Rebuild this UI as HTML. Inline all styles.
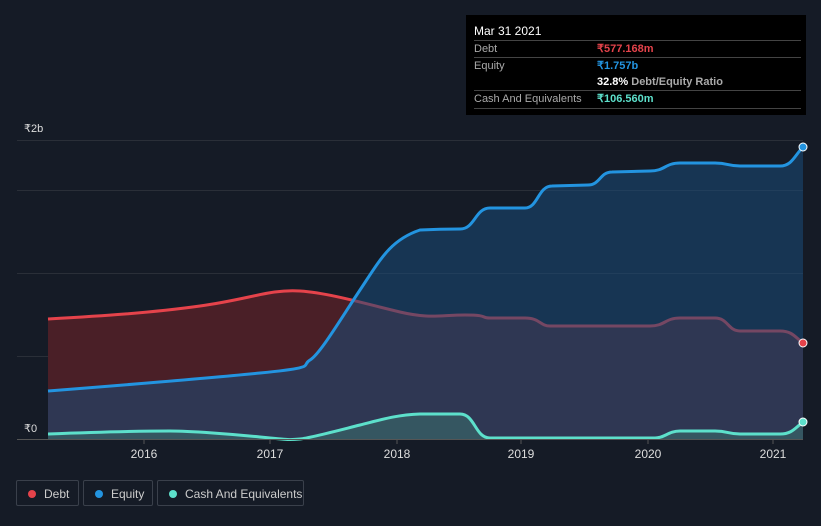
<!DOCTYPE html>
<html><head><meta charset="utf-8"><style>
body{margin:0;background:#151b26;width:821px;height:526px;overflow:hidden;font-family:"Liberation Sans",sans-serif;position:relative}
.tt{position:absolute;left:466px;top:15px;width:340px;height:100px;background:#000;color:#fff;font-size:11px}
.row{position:absolute;left:8px;width:327px;border-top:1px solid #444;height:17px;line-height:17px;color:#aaa}
.row b{position:absolute;left:123px;font-weight:bold}
.leg{position:absolute;top:480px;height:26px;border:1px solid #3a404b;border-radius:2px;color:#ccc;font-size:12px;line-height:26px;box-sizing:border-box}
.leg i{position:absolute;left:11px;top:9px;width:8px;height:8px;border-radius:50%}
.leg span{position:absolute;left:27px}
</style></head><body>
<svg width="821" height="526" style="position:absolute;left:0;top:0">
<g stroke="#2a2f38" stroke-width="1">
<line x1="17" y1="140.5" x2="803" y2="140.5"/><line x1="17" y1="190.5" x2="803" y2="190.5"/>
<line x1="17" y1="273.5" x2="803" y2="273.5"/><line x1="17" y1="356.5" x2="803" y2="356.5"/>
</g>
<path d="M48,319 C100,316 150,313 200,306 S270,289 300,291 S370,305 400,312 S440,315 465,315 S480,318 490,318 L525,318 C540,318 540,326 550,326 L650,326 C665,326 665,318 680,318 L715,318 C728,318 728,331 740,331 L780,331 C792,331 795,337 803,343 L803,439 L48,439Z" fill="#4a1f27"/>
<path d="M48,319 C100,316 150,313 200,306 S270,289 300,291 S370,305 400,312 S440,315 465,315 S480,318 490,318 L525,318 C540,318 540,326 550,326 L650,326 C665,326 665,318 680,318 L715,318 C728,318 728,331 740,331 L780,331 C792,331 795,337 803,343" fill="none" stroke="#e5434b" stroke-width="3"/>
<path d="M48,391 C150,383 200,379 260,373 S300,366 310,360 S340,320 360,290 S390,240 420,230 C440,229 450,229 460,229 C475,229 475,208 490,208 L525,208 C538,208 538,186 552,186 L588,185 C600,185 600,172 612,172 L650,171 C665,171 665,163 680,163 L715,163 C728,163 728,166 740,166 L780,166 C792,166 795,155 803,147 L803,439 L48,439Z" fill="#1a4a78" fill-opacity="0.55"/>
<path d="M48,391 C150,383 200,379 260,373 S300,366 310,360 S340,320 360,290 S390,240 420,230 C440,229 450,229 460,229 C475,229 475,208 490,208 L525,208 C538,208 538,186 552,186 L588,185 C600,185 600,172 612,172 L650,171 C665,171 665,163 680,163 L715,163 C728,163 728,166 740,166 L780,166 C792,166 795,155 803,147" fill="none" stroke="#2394e0" stroke-width="3"/>
<path d="M48,434 C100,432 150,431 170,431 S230,434 260,437 S290,440 300,439 S340,430 360,425 S395,415 420,414 L460,414 C475,414 475,438 490,438 L655,438 C665,438 668,431 680,431 L715,431 C728,431 728,434 740,434 L780,434 C792,434 795,428 803,422 L803,439 L48,439Z" fill="#3a6a6a" fill-opacity="0.6"/>
<path d="M48,434 C100,432 150,431 170,431 S230,434 260,437 S290,440 300,439 S340,430 360,425 S395,415 420,414 L460,414 C475,414 475,438 490,438 L655,438 C665,438 668,431 680,431 L715,431 C728,431 728,434 740,434 L780,434 C792,434 795,428 803,422" fill="none" stroke="#5de0cb" stroke-width="3"/>
<line x1="17" y1="439.5" x2="803" y2="439.5" stroke="#555"/>
<rect x="17" y="419" width="31" height="20" fill="#151b26"/>
<circle cx="803" cy="147" r="4" fill="#2394e0" stroke="#fff" stroke-width="1"/>
<circle cx="803" cy="343" r="4" fill="#e5434b" stroke="#fff" stroke-width="1"/>
<circle cx="803" cy="422" r="4" fill="#5de0cb" stroke="#fff" stroke-width="1"/>
<g stroke="#555"><line x1="144" y1="440" x2="144" y2="444"/><line x1="270" y1="440" x2="270" y2="444"/><line x1="397" y1="440" x2="397" y2="444"/><line x1="521" y1="440" x2="521" y2="444"/><line x1="648" y1="440" x2="648" y2="444"/><line x1="773" y1="440" x2="773" y2="444"/></g>
<g fill="#ddd" font-size="12" font-family="Liberation Sans,sans-serif" text-anchor="middle">
<text x="144" y="458">2016</text><text x="270" y="458">2017</text><text x="397" y="458">2018</text><text x="521" y="458">2019</text><text x="648" y="458">2020</text><text x="773" y="458">2021</text>
</g>
<g fill="#ddd" font-size="11" font-family="Liberation Sans,sans-serif"><text x="24" y="132">₹2b</text><text x="24" y="432">₹0</text></g>
</svg>
<div class="tt">
<div style="position:absolute;left:8px;top:9px;font-size:12px">Mar 31 2021</div>
<div class="row" style="top:25px">Debt<b style="color:#e5434b">₹577.168m</b></div>
<div class="row" style="top:42px">Equity<b style="color:#2394e0">₹1.757b</b></div>
<div class="row" style="top:59px;border-top:none"><b style="color:#fff">32.8% <span style="color:#aaa">Debt/Equity Ratio</span></b></div>
<div class="row" style="top:75px">Cash And Equivalents<b style="color:#5de0cb">₹106.560m</b></div>
<div class="row" style="top:93px;height:0"></div>
</div>
<div class="leg" style="left:16px;width:63px"><i style="background:#e5434b"></i><span>Debt</span></div>
<div class="leg" style="left:83px;width:70px"><i style="background:#2394e0"></i><span>Equity</span></div>
<div class="leg" style="left:157px;width:147px"><i style="background:#5de0cb"></i><span>Cash And Equivalents</span></div>
</body></html>
